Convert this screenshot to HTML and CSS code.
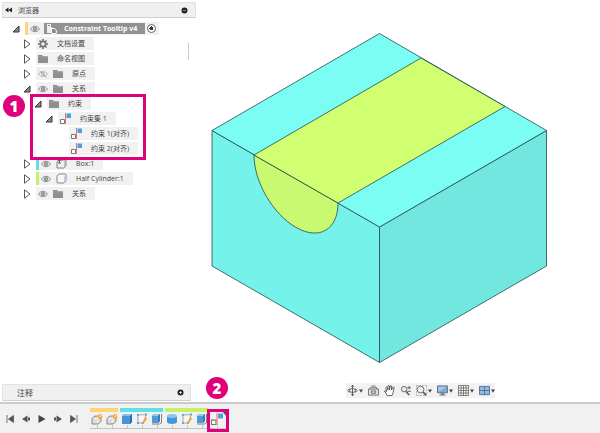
FILE: index.html
```html
<!DOCTYPE html>
<html lang="zh-CN">
<head>
<meta charset="utf-8">
<meta name="viewport" content="width=device-width, initial-scale=1">
<title>Constraint Tooltip v4</title>
<link rel="stylesheet" href="styles.css">
</head>
<body>
<svg class="defs" aria-hidden="true">
  <symbol id="open" viewBox="0 0 8 8"><path d="M7 1v6H1z" fill="#8a8a8a" stroke="#333"/></symbol>
  <symbol id="closed" viewBox="0 0 8 10"><path d="M1.500 .8v8.400L7 5z" fill="#fff" stroke="#555"/></symbol>
  <symbol id="eye" viewBox="0 0 10 8"><path d="M.4 4Q5-1.600 9.600 4 5 9.600 .4 4z" fill="#e4e4e4" stroke="#909090"/><circle cx="5" cy="4" r="2.100" fill="#858585"/><circle cx="5" cy="4" r=".7" fill="#ddd"/></symbol>
  <symbol id="eye-off" viewBox="0 0 10 8"><path d="M.4 4Q5-1 9.600 4 5 9 .4 4z" fill="#f6f6f6" stroke="#aaa" stroke-width=".8"/><circle cx="5" cy="4" r="1.600" fill="none" stroke="#aaa" stroke-width=".8"/><path d="M1.500 .8l7 6.400" stroke="#999" stroke-width=".8"/></symbol>
  <symbol id="folder" viewBox="0 0 10 8"><path d="M0 0h4l1 1.200h5V8H0z" fill="#8e8e8e"/><path d="M0 2h10" stroke="#aaa" stroke-width=".5"/></symbol>
  <symbol id="gear" viewBox="0 0 10 10"><path d="M5 0v10M0 5h10M1.500 1.500l7 7M8.500 1.500l-7 7" stroke="#777" stroke-width="1.700"/><circle cx="5" cy="5" r="2.700" fill="#f2f2f2" stroke="#777" stroke-width="1.800"/></symbol>
  <symbol id="parts" viewBox="0 0 11 11"><path d="M1 1h4v3h1v6H1z" fill="#eee"/><path d="M5.500 5.500h3l1.800 1.500v3.500H5.500z" fill="#888" stroke="#fff"/><path d="M2 2.500h2" stroke="#888"/></symbol>
  <symbol id="constraint" viewBox="0 0 11 11"><path d="M.5 6.500h4v4h-4z" fill="#fff" stroke="#777"/><path d="M5.500 0v11" stroke="#ed7078"/><path d="M6.500 .5H11V5H6.500z" fill="#4ba0dc"/></symbol>
  <symbol id="body" viewBox="0 0 11 11"><path d="M1 3.500Q1 2.500 2 2l1.500-1h5.500q1 0 1 1v5.500L8.500 9.400Q8 10 7 10H2Q1 10 1 9z" fill="#f5f7fa" stroke="#72777d" stroke-width=".9"/><path d="M8 3.500v5.800l1.800-1.600V1.800z" fill="#c7ccd3"/></symbol>
  <symbol id="grounded" viewBox="0 0 11 11"><path d="M1 4l2.500-2h6.500v6L8 10H1z" fill="#eee" stroke="#777" stroke-width=".9"/><path d="M8 4v6l2-2V2z" fill="#bbb"/><path d="M3.500 0v5M1.500 2.200h4M2 5h3" stroke="#555" stroke-width=".9"/></symbol>
  <symbol id="component" viewBox="0 0 12 12"><path d="M1 5.500L4 3h6v5.500L7 11H1z" fill="#ddd" stroke="#888" stroke-linejoin="round"/><path d="M2 5.700h5V10" fill="none" stroke="#f5f5f5" stroke-width=".8"/><path d="M8.500 0l.7 1.500L11 1.200l-.5 1.700L12 4l-1.600 .7 .2 1.600-1.600-.7-1.600 .7 .2-1.600L6.300 3.500l1.500-.7z" fill="#ffa51f"/><circle cx="9.200" cy="3.200" r="1" fill="#ffe27a"/></symbol>
  <symbol id="extrude" viewBox="0 0 12 12"><path d="M1 3l2-2h8v8l-2 2H1z" fill="#4596d8"/><path d="M1 3l2-2h8L9 3z" fill="#86c0ed"/><path d="M9 3l2-2v8l-2 2z" fill="#286fae"/></symbol>
  <symbol id="sketch" viewBox="0 0 12 12"><path d="M2 2l8-.4L7.500 10H2z" fill="#f7f7f7" stroke="#8d9399" stroke-width=".8"/><path d="M1 1h2v2H1zM9 .6h2v2H9zM1 9h2v2H1z" fill="#5da8df"/><path d="M10.500 5L6.800 9.800" stroke="#f0a73d" stroke-width="2"/><path d="M6.800 9.200L6 11l1.800-.8z" fill="#d94747"/></symbol>
  <symbol id="press" viewBox="0 0 12 12"><path d="M1 3l2-2h6v7l-2 2H1z" fill="#4c9cdb"/><path d="M1 3l2-2h6L7 3z" fill="#97c6e8"/><path d="M7 3l2-2v7l-2 2z" fill="#347cb7"/><path d="M10.500 1v9M1 11h8l1.500-1.500" fill="none" stroke="#666" stroke-width=".8"/></symbol>
  <symbol id="cylinder" viewBox="0 0 12 12"><path d="M1 3v6c0 2.600 10 2.600 10 0V3z" fill="#4297dc"/><ellipse cx="6" cy="3" rx="5" ry="2" fill="#8bc2ed"/></symbol>
  <symbol id="caret" viewBox="0 0 4 4"><path d="M0 .5h4L2 3.800z" fill="#444"/></symbol>
</svg>

<main class="workspace">
  <aside class="side">
    <section class="browser">
      <header class="panel browser-head">
        <button class="bare" aria-label="Collapse"><svg class="rewind" viewBox="0 0 7 6"><path d="M3.500 .5v5L0 3zM7 .5v5L3.500 3z" fill="#222"/></svg></button>
        <h2>浏览器</h2>
        <button class="bare end" aria-label="Options"><svg class="dot" viewBox="0 0 7 7"><circle cx="3.500" cy="3.500" r="3" fill="#222"/><path d="M2 3.500h3" stroke="#aaa" stroke-width=".8"/></svg></button>
      </header>
      <ul class="tree">
        <li>
          <div class="row"><button class="bare slot" aria-label="Toggle"><svg class="tri"><use href="#open"/></svg></button>
            <div class="pill root bar orange"><svg class="eye"><use href="#eye"/></svg><span class="title"><svg class="part"><use href="#parts"/></svg>Constraint Tooltip v4</span><input type="radio" class="active" aria-label="Active" checked></div></div>
          <ul>
            <li class="row"><button class="bare slot" aria-label="Toggle"><svg class="tri shut"><use href="#closed"/></svg></button><div class="pill"><svg class="gear"><use href="#gear"/></svg><span>文档设置</span></div></li>
            <li class="row"><button class="bare slot" aria-label="Toggle"><svg class="tri shut"><use href="#closed"/></svg></button><div class="pill"><svg class="folder"><use href="#folder"/></svg><span>命名视图</span></div></li>
            <li class="row"><button class="bare slot" aria-label="Toggle"><svg class="tri shut"><use href="#closed"/></svg></button><div class="pill"><svg class="eye"><use href="#eye-off"/></svg><svg class="folder"><use href="#folder"/></svg><span>原点</span></div></li>
            <li>
              <div class="row"><button class="bare slot" aria-label="Toggle"><svg class="tri"><use href="#open"/></svg></button><div class="pill"><svg class="eye"><use href="#eye"/></svg><svg class="folder"><use href="#folder"/></svg><span>关系</span></div></div>
              <ul class="marked">
                <li>
                  <div class="row"><button class="bare slot" aria-label="Toggle"><svg class="tri"><use href="#open"/></svg></button><div class="pill"><svg class="folder"><use href="#folder"/></svg><span>约束</span></div></div>
                  <ul>
                    <li>
                      <div class="row"><button class="bare slot" aria-label="Toggle"><svg class="tri"><use href="#open"/></svg></button><div class="pill"><svg class="part"><use href="#constraint"/></svg><span>约束集 1</span></div></div>
                      <ul>
                        <li class="row"><i class="slot"></i><div class="pill"><svg class="part"><use href="#constraint"/></svg><span>约束 1(对齐)</span></div></li>
                        <li class="row"><i class="slot"></i><div class="pill"><svg class="part"><use href="#constraint"/></svg><span>约束 2(对齐)</span></div></li>
                      </ul>
                    </li>
                  </ul>
                </li>
                <li class="frame tree-frame" aria-hidden="true"></li>
                <li class="badge badge-tree">1</li>
              </ul>
            </li>
            <li class="row"><button class="bare slot" aria-label="Toggle"><svg class="tri shut"><use href="#closed"/></svg></button><div class="pill bar cyan"><svg class="eye"><use href="#eye"/></svg><svg class="part"><use href="#grounded"/></svg><span>Box:1</span></div></li>
            <li class="row"><button class="bare slot" aria-label="Toggle"><svg class="tri shut"><use href="#closed"/></svg></button><div class="pill bar lime"><svg class="eye"><use href="#eye"/></svg><svg class="part"><use href="#body"/></svg><span>Half Cylinder:1</span></div></li>
            <li class="row"><button class="bare slot" aria-label="Toggle"><svg class="tri shut"><use href="#closed"/></svg></button><div class="pill"><svg class="eye"><use href="#eye"/></svg><svg class="folder"><use href="#folder"/></svg><span>关系</span></div></li>
          </ul>
        </li>
      </ul>
      <div class="grip" aria-hidden="true"></div>
    </section>
    <section class="panel comments">
      <h2>注释</h2>
      <button class="bare end" aria-label="Add"><svg class="dot" viewBox="0 0 7 7"><circle cx="3.500" cy="3.500" r="3" fill="#222"/><path d="M2 3.500h3M3.500 2v3" stroke="#eee" stroke-width=".8"/></svg></button>
    </section>
  </aside>

  <section class="view">
    <svg class="model" viewBox="211 33 336 331" role="img" aria-label="Box and half cylinder">
      <g stroke="#234c4c" stroke-width=".8" stroke-linejoin="round">
        <path d="M212 130.500L379.500 227v135.500L212 266z" fill="#75f2e9"/>
        <path d="M379.500 227l167-96.500V266l-167 96.500z" fill="#71e7df"/>
        <path d="M379.500 33.500l167 97-167 96.500L212 130.500z" fill="#7bfdf3"/>
        <path d="M254 155C254 181.700 272.800 214.100 296 227.400S338 229.700 338 203z" fill="#c8f970"/>
        <path d="M254 155L421 58l84 48.500L338 203z" fill="#d1ff72"/>
      </g>
    </svg>
    <nav class="tools">
      <button class="bare" aria-label="Orbit"><svg class="tool" viewBox="0 0 12 12"><ellipse cx="6" cy="6" rx="5.300" ry="2" fill="none" stroke="#666"/><path d="M6 0v12M4.500 2L6 .3 7.500 2M4.500 10L6 11.700 7.500 10M3 4.500v3M9 4.500v3" fill="none" stroke="#555"/></svg><svg class="caret"><use href="#caret"/></svg></button>
      <button class="bare" aria-label="Look at"><svg class="tool" viewBox="0 0 12 12"><path d="M.5 4.500h11V11H.5zM2 4.500L3 2.500h6l1 2" fill="#eee" stroke="#666"/><path d="M3.500 6.500h5v2.500h-5z" fill="#ddd" stroke="#666"/><path d="M4 1h4" stroke="#777"/></svg></button>
      <button class="bare" aria-label="Pan"><svg class="tool" viewBox="0 0 12 12"><path d="M3.500 11.500C3 9.500 1 8 .5 6.500q.8-1 2.300 .8L2 2.800q.8-1 1.400 0l.9 2.700L4.200 1q.8-1 1.500 0l.4 4.300L6.800 1q.9-.8 1.500 .2L8.200 5.500l1.400-3q1-.6 1.400 .5L10 8q-.3 2-1.300 3.500z" fill="#fff" stroke="#444" stroke-width=".9"/></svg></button>
      <button class="bare" aria-label="Zoom"><svg class="tool" viewBox="0 0 12 12"><circle cx="4.500" cy="4.500" r="3" fill="#dcecf5" stroke="#666"/><path d="M6.500 7l3.500 4" stroke="#555" stroke-width="1.600"/><path d="M8 3h4M10 1v4M8 7h4" stroke="#555" stroke-width=".9"/></svg></button>
      <button class="bare" aria-label="Zoom window"><svg class="tool" viewBox="0 0 12 12"><path d="M.5 .5h11v11H.5z" fill="none" stroke="#999" stroke-width=".8" stroke-dasharray="2 1"/><circle cx="5" cy="5" r="3.700" fill="#e5f1f3" stroke="#666"/><path d="M7.800 7.800L11 11" stroke="#555" stroke-width="1.800"/></svg><svg class="caret"><use href="#caret"/></svg></button>
      <button class="bare" aria-label="Display"><svg class="tool" viewBox="0 0 12 12"><path d="M.6 1h10.800V8.500H.6z" fill="#7baadb" stroke="#616a73"/><path d="M1.500 2h9L1.500 7z" fill="#a9caec"/><path d="M4 9h4v1.500h1.500v1h-7v-1H4z" fill="#777"/></svg><svg class="caret"><use href="#caret"/></svg></button>
      <button class="bare" aria-label="Grid"><svg class="tool" viewBox="0 0 12 12"><path d="M.5 .5h11v11H.5zM3.300 .5v11M6 .5v11M8.700 .5v11M.5 3.300h11M.5 6h11M.5 8.700h11" fill="#fff" stroke="#666" stroke-width=".9"/></svg><svg class="caret"><use href="#caret"/></svg></button>
      <button class="bare" aria-label="Viewports"><svg class="tool" viewBox="0 0 12 12"><path d="M.5 1.500h11v9H.5zM6 1.500v9M.5 6h11" fill="#8fbbe8" stroke="#536f8c"/></svg><svg class="caret"><use href="#caret"/></svg></button>
    </nav>
  </section>
</main>

<footer class="timeline">
  <div class="player">
    <button class="bare" aria-label="First"><svg viewBox="0 0 8 8"><path d="M1 0v8M7.500 .5v7L2.500 4z" fill="#555" stroke="#555" stroke-width=".8"/></svg></button>
    <button class="bare" aria-label="Back"><svg viewBox="0 0 8 8"><path d="M5.500 .5v7L0 4zM6 2.500h2v3H6z" fill="#555"/></svg></button>
    <button class="bare" aria-label="Play"><svg viewBox="0 0 8 8"><path d="M.5 0v8L7.500 4z" fill="#444"/></svg></button>
    <button class="bare" aria-label="Forward"><svg viewBox="0 0 8 8"><path d="M2.500 .5v7L8 4zM0 2.500h2v3H0z" fill="#555"/></svg></button>
    <button class="bare" aria-label="Last"><svg viewBox="0 0 8 8"><path d="M7 0v8M.5 .5v7L5.500 4z" fill="#555" stroke="#555" stroke-width=".8"/></svg></button>
  </div>
  <div class="history">
    <div class="group orange"><button class="bare step" aria-label="Component"><svg><use href="#component"/></svg></button><button class="bare step" aria-label="Component"><svg><use href="#component"/></svg></button></div>
    <div class="group cyan"><button class="bare step" aria-label="Box"><svg><use href="#extrude"/></svg></button><button class="bare step" aria-label="Sketch"><svg><use href="#sketch"/></svg></button><button class="bare step" aria-label="Extrude"><svg><use href="#press"/></svg></button></div>
    <div class="group lime"><button class="bare step" aria-label="Cylinder"><svg><use href="#cylinder"/></svg></button><button class="bare step" aria-label="Sketch"><svg><use href="#sketch"/></svg></button><button class="bare step" aria-label="Extrude"><svg><use href="#press"/></svg></button></div>
    <div class="group current"><button class="bare step" aria-label="Constraint"><svg><use href="#constraint"/></svg></button><svg class="marker" viewBox="0 0 5 13"><path d="M0 0h5v13H4V5z" fill="#555"/></svg><span class="frame step-frame"></span><span class="badge badge-step">2</span></div>
  </div>
</footer>
</body>
</html>
```
FILE: styles.css
```css
* {
  box-sizing: border-box;
}

body {
  margin: 0;
  min-height: 100vh;
  display: flex;
  flex-direction: column;
  background: #fff;
  color: #444;
  font: 7px/13px "Open Sans", "Noto Sans CJK SC", sans-serif;
}

.defs {
  position: absolute;
  width: 0;
  height: 0;
}

svg {
  display: block;
  flex: none;
}

ul {
  list-style: none;
  margin: 0;
  padding: 0;
}

h2 {
  margin: 0;
  font-size: 7px;
  font-weight: 400;
}

.bare {
  display: flex;
  align-items: center;
  margin: 0;
  padding: 0;
  border: 0;
  background: none;
}

.workspace {
  flex: 1;
  display: grid;
  grid-template-columns: 196px 1fr;
}

.side {
  display: flex;
  flex-direction: column;
  justify-content: space-between;
  padding: 2px 0 1px 2px;
}

.browser {
  position: relative;
}

.panel {
  display: flex;
  align-items: center;
  background: #f0f0f0;
  border: 1px solid #e2e2e2;
  border-bottom-color: #d0d0d0;
}

.browser-head {
  height: 16px;
  gap: 6px;
  padding: 0 7px 0 2px;
}

.end {
  margin-left: auto;
}

.rewind {
  width: 7px;
  height: 6px;
}

.dot {
  width: 7px;
  height: 7px;
}

.comments {
  height: 17px;
  margin-right: 5px;
  padding: 0 6px 0 14px;
}

.comments h2 {
  font-size: 8px;
}

.grip {
  position: absolute;
  top: 41px;
  right: 7px;
  width: 1px;
  height: 17px;
  background: #ccc;
}

.tree {
  padding: 3px 0 0 10px;
}

.tree ul {
  padding-left: 11px;
}

.row {
  display: flex;
  align-items: center;
  height: 15px;
}

.slot {
  width: 13px;
  flex: none;
}

.tri {
  width: 8px;
  height: 8px;
}

.shut {
  height: 10px;
}

.pill {
  display: flex;
  align-items: center;
  height: 13px;
  padding: 0 9px 0 2px;
  background: #f1f1f1;
  white-space: nowrap;
}

.pill span {
  margin-left: 9px;
}

.eye {
  width: 10px;
  height: 8px;
}

.eye + svg {
  margin-left: 5px;
}

.folder {
  width: 10px;
  height: 8px;
}

.gear {
  width: 10px;
  height: 10px;
}

.part {
  width: 11px;
  height: 11px;
}

.bar {
  border-left: 3px solid;
}

.orange {
  border-color: #ffd479;
}

.cyan {
  border-color: #62dfe2;
}

.lime {
  border-color: #c3f266;
}

.root {
  padding-right: 3px;
}

.pill .title {
  display: flex;
  align-items: center;
  gap: 7px;
  margin: 0 2px 0 4px;
  padding: 0 8px 0 2px;
  height: 11px;
  background: #929292;
  color: #fff;
  font-weight: 700;
}

.active {
  appearance: none;
  width: 9px;
  height: 9px;
  margin: 0;
  border: 1px solid #666;
  border-radius: 50%;
  background: radial-gradient(circle, #333 2px, #fff 2px);
}

.marked {
  position: relative;
}

.frame {
  position: absolute;
  border: 3px solid #e0007c;
  pointer-events: none;
}

.tree-frame {
  top: -2px;
  bottom: -4px;
  left: 7px;
  width: 116px;
}

.badge {
  position: absolute;
  width: 22px;
  height: 22px;
  border-radius: 50%;
  background: #e0007c;
  color: #fff;
  font-size: 15px;
  font-weight: 800;
  line-height: 22px;
  text-align: center;
}

.badge-tree {
  top: -1px;
  left: -20px;
}

.view {
  display: flex;
  flex-direction: column;
  justify-content: space-between;
  align-items: flex-start;
  padding: 33px 53px 4px 15px;
}

.model {
  width: 100%;
}

.tools {
  display: flex;
  gap: 5px;
  height: 15px;
  padding-left: 1px;
  margin-left: 135px;
  background: #f2f2f2;
}

.tools .bare {
  gap: 1px;
}

.tool {
  width: 11px;
  height: 11px;
}

.caret {
  width: 4px;
  height: 4px;
}

.timeline {
  display: flex;
  height: 31px;
  border-top: 2px solid #cbcbcb;
  background: #f1f1f1;
}

.player {
  display: flex;
  gap: 8px;
  padding: 0 12px 0 6px;
}

.player svg {
  width: 8px;
  height: 8px;
}

.history {
  display: flex;
  padding-top: 4px;
}

.group {
  position: relative;
  display: flex;
}

.group::before {
  content: "";
  position: absolute;
  inset: 0 2px auto 0;
  border-top: 4px solid;
  border-color: inherit;
}

.current::before {
  display: none;
}

.step {
  position: relative;
  align-items: flex-start;
  width: 15px;
  height: 21px;
  padding: 5px 1px 0;
  border-bottom: 1px solid #c4c4c4;
}

.step::after {
  content: "";
  position: absolute;
  bottom: 0;
  left: 7px;
  width: 1px;
  height: 3px;
  background: #c4c4c4;
}

.step svg {
  width: 12px;
  height: 12px;
}

.marker {
  position: absolute;
  top: 3px;
  left: 12px;
  width: 5px;
  height: 13px;
}

.step-frame {
  top: 1px;
  left: -3px;
  width: 22px;
  height: 23px;
}

.badge-step {
  top: -31px;
  left: -4px;
}
```
